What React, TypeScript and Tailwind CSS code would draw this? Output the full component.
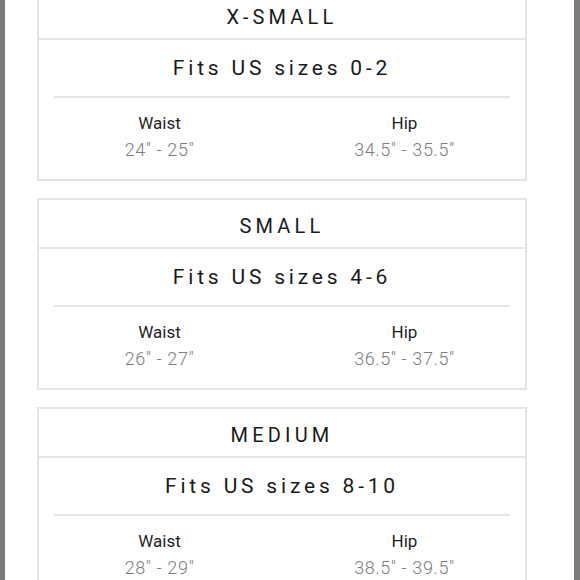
const sizes = [
  { name: 'X-SMALL', fits: 'Fits US sizes 0-2', waist: '24" - 25"', hip: '34.5" - 35.5"' },
  { name: 'SMALL', fits: 'Fits US sizes 4-6', waist: '26" - 27"', hip: '36.5" - 37.5"' },
  { name: 'MEDIUM', fits: 'Fits US sizes 8-10', waist: '28" - 29"', hip: '38.5" - 39.5"' },
];

const SizeCard = ({ size }: { size: (typeof sizes)[number] }) => (
  <div className="w-[490px] border-2 border-[#e4e4e4] bg-white">
    <div className="h-[49px] flex items-center justify-center border-b-2 border-[#e4e4e4] pt-[4px]">
      <span className="text-[20px] tracking-[4.2px] text-[#1a1a1a]">{size.name}</span>
    </div>
    <div className="h-[56px] flex items-center justify-center pt-[2px]">
      <span className="text-[21px] tracking-[3.8px] text-[#1a1a1a]">{size.fits}</span>
    </div>
    <div className="mx-[15px] h-[2px] bg-[#e4e4e4]" />
    <div className="h-[81px] flex pt-[12px] -mx-[2px]">
      <div className="flex-1 flex flex-col items-center">
        <span className="text-[17px] leading-[27px] text-[#1f1f1f]">Waist</span>
        <span className="text-[18px] leading-[26px] tracking-[0.6px] text-[#7c7c7c] font-light">{size.waist}</span>
      </div>
      <div className="flex-1 flex flex-col items-center">
        <span className="text-[17px] leading-[27px] text-[#1f1f1f]">Hip</span>
        <span className="text-[18px] leading-[26px] tracking-[0.6px] text-[#7c7c7c] font-light">{size.hip}</span>
      </div>
    </div>
  </div>
);

export default function App() {
  return (
    <div
      className="w-[580px] h-[580px] overflow-hidden flex bg-white"
      style={{ fontFamily: 'Roboto, "Liberation Sans", sans-serif' }}
    >
      <div className="w-[5px] bg-[#7b7b7b]" />
      <div className="flex-1 pl-[32px]">
        <div className="flex flex-col gap-[17px] mt-[-11px]">
          {sizes.map((s) => (
            <SizeCard key={s.name} size={s} />
          ))}
        </div>
      </div>
      <div className="w-[6px] bg-[#7b7b7b]" />
    </div>
  );
}
